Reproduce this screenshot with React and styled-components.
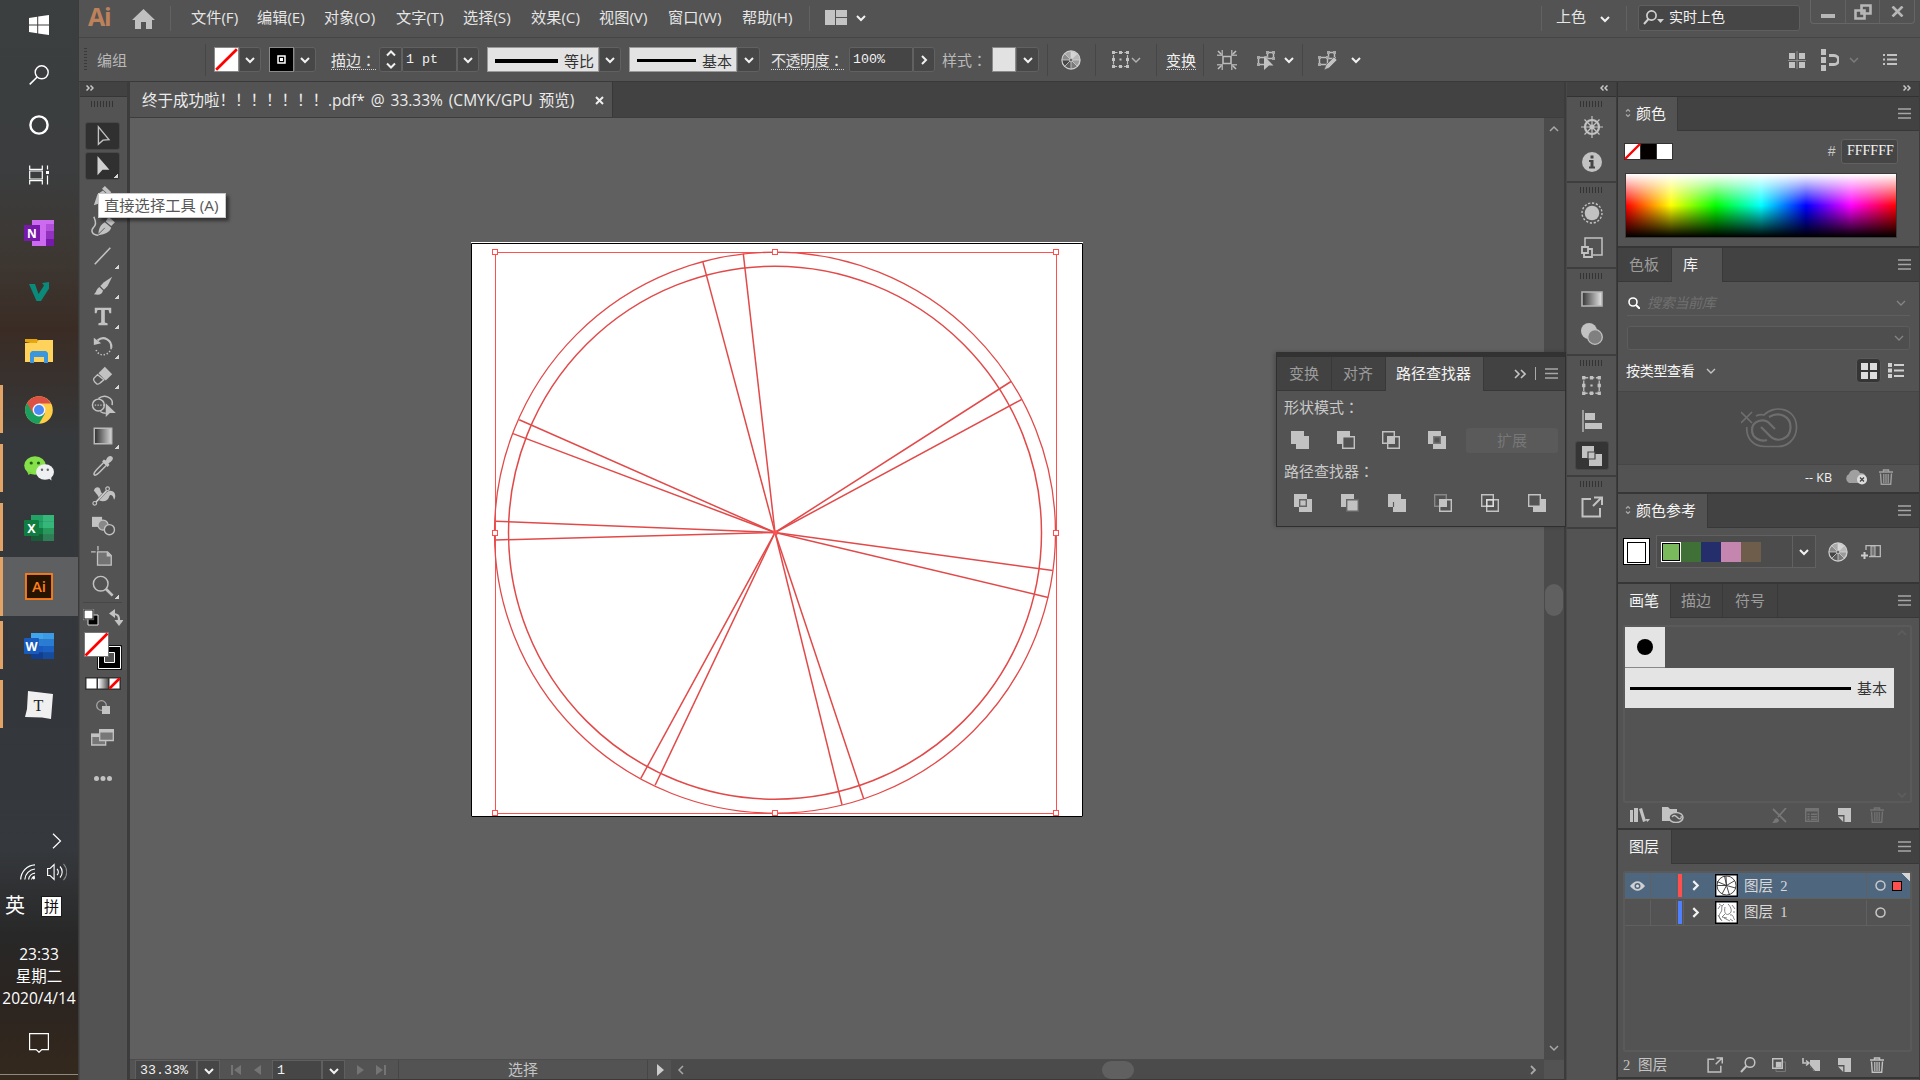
import React from "react";
import styled, { createGlobalStyle, css } from "styled-components";

const Global = createGlobalStyle`
  * { box-sizing: border-box; }
  html, body { margin: 0; padding: 0; background: #535353; overflow: hidden; }
  svg { display: block; flex: none; }
`;

const ui = `"Open Sans", "Noto Sans CJK SC", sans-serif`;
const mono = `"Liberation Mono", "Noto Sans CJK SC", monospace`;
const serif = `"Liberation Serif", "Noto Sans CJK SC", serif`;
const G = "#c2c2c2";

const Screen = styled.div`
  width: 1920px; height: 1080px; display: flex; overflow: hidden;
  font-family: ${ui}; font-size: 15px; line-height: 20px; color: #e6e6e6;
  white-space: nowrap; position: relative; background: #535353;
`;

/* ---------- generic pieces ---------- */
const Cell = styled.div`
  flex: none; display: flex; align-items: center;
  justify-content: ${(p) => (p.$center ? "center" : "flex-start")};
  width: ${(p) => (p.$w ? p.$w + "px" : "auto")};
  height: ${(p) => (p.$h ? p.$h + "px" : "auto")};
  margin-left: ${(p) => p.$ml || 0}px;
  margin-top: ${(p) => p.$mt || 0}px;
`;
const Rule = styled.div`
  flex: none; width: 1px; height: ${(p) => p.$h || 32}px; background: ${(p) => p.$c || "#464646"};
  margin-left: ${(p) => p.$ml || 0}px;
`;
const Text = styled.span`
  color: ${(p) => p.$c || "#e6e6e6"};
  font-size: ${(p) => p.$s || 15}px;
  font-family: ${(p) => (p.$f === "mono" ? mono : p.$f === "serif" ? serif : ui)};
  font-style: ${(p) => (p.$i ? "italic" : "normal")};
  letter-spacing: ${(p) => p.$ls || 0}px;
  word-spacing: ${(p) => p.$ws || 0}px;
  ${(p) => p.$dotted && css`border-bottom: 1px dotted #d0d0d0; line-height: 17px; padding-top: 2px;`}
`;
const Colon = styled.span`font-family: "Noto Sans CJK TC", sans-serif;`;

const Svg = ({ w, h = w, vb, children, ...r }) => (
  <svg width={w} height={h} viewBox={vb || `0 0 ${w} ${h}`} fill="none" {...r}>{children}</svg>
);
const Chev = ({ d = "down", c = "#f2f2f2", w = 2, s = 10 }) => {
  const p = { down: "M1 3l4 4 4-4", up: "M1 7l4-4 4 4", right: "M3 1l4 4-4 4", left: "M7 1L3 5l4 4" }[d];
  return <Svg w={s} vb="0 0 10 10"><path d={p} stroke={c} strokeWidth={w} /></Svg>;
};
const Double = ({ left }) => (
  <Svg w={8} h={6}>
    <path d={left ? "M3.500.500L1 3l2.500 2.500M7.500.500L5 3l2.500 2.500" : "M.5.500L3 3 .5 5.500M4.500.500L7 3 4.500 5.500"} stroke="#c8c8c8" strokeWidth="1.500" />
  </Svg>
);
const Grip = styled.div`
  width: 23px; height: 6px; flex: none;
  background: repeating-linear-gradient(90deg, #333 0 1px, transparent 1px 3px);
`;
const Burger = ({ c = "#a6a6a6" }) => (
  <Svg w={13} h={11}><path d="M0 1h13M0 5.500h13M0 10h13" stroke={c} strokeWidth="1.400" /></Svg>
);

/* ---------- taskbar ---------- */
const Taskbar = styled.div`
  width: 79px; height: 1080px; flex: none; display: flex; flex-direction: column; align-items: stretch;
  border-right: 1px solid #3b3b3b;
  background: linear-gradient(180deg, #3b3f40 0, #3b3d3e 170px, #3d3732 260px, #3a2c25 330px, #38322f 385px, #36393c 440px, #33363a 700px, #35383c 850px, #282828 935px, #2b2420 1000px, #35291d 1080px);
`;
const TaskItem = styled.div`
  height: ${(p) => p.$h || 59}px; flex: none; display: flex; align-items: center; justify-content: center;
  position: relative; background: ${(p) => (p.$active ? "#5d5f61" : "transparent")};
  ${(p) => p.$run && css`&::before { content: ""; position: absolute; left: 0; top: ${p.$active ? 0 : 5}px; bottom: ${p.$active ? 0 : 6}px; width: 3px; background: #e2a366; }`}
`;
const Tray = styled.div`
  margin-top: auto; display: flex; flex-direction: column; height: 254px; color: #fff;
`;
const TrayRow = styled.div`
  height: ${(p) => p.$h}px; display: flex; align-items: center; flex: none;
  padding-left: ${(p) => p.$pl || 0}px; gap: ${(p) => p.$gap || 0}px;
`;
const ImeBadge = styled.div`
  width: 19px; height: 19px; background: #fff; color: #111; font-size: 15px; line-height: 18px; text-align: center;
  outline: 1px solid #1a1a1a;
`;
const Clock = styled.div`
  text-align: center; font-size: 15.500px; line-height: 22px; height: 66px; flex: none; margin-top: 18px;
  width: 78px;
`;
const Notice = styled.div`
  height: 55px; border-bottom: 1px solid #8d8983; display: flex; justify-content: center;
  padding-top: 13px; flex: none; margin-top: 11px;
`;
const OfficeIcon = ({ letter, tile, shade, cols }) => (
  <Svg w={30} h={26}>
    {cols.map((c, i) => <rect key={i} x="7" y={i * 6.5} width="23" height="6.6" fill={c} />)}
    <rect x="19" y="0" width="11" height="26" fill={shade} opacity=".22" />
    <rect x="0" y="5" width="15" height="16" rx="1" fill={tile} />
    <text x="7.500" y="17.500" textAnchor="middle" fontFamily="Open Sans" fontWeight="700" fontSize="12.500" fill="#fff">{letter}</text>
  </Svg>
);
const TaskbarView = () => (
  <Taskbar>
    <TaskItem $h={50}><Svg w={20}><path d="M0 3l8.200-1.200v7.700H0zM9.200 1.600L20 0v9.500H9.200zM0 10.500h8.200v7.700L0 17zM9.200 10.500H20V20L9.200 18.400z" fill="#fff" /></Svg></TaskItem>
    <TaskItem $h={50}><Svg w={20}><circle cx="12.700" cy="7.300" r="6.500" stroke="#fff" strokeWidth="1.400" /><path d="M8.200 12L.7 19.400" stroke="#fff" strokeWidth="1.500" /></Svg></TaskItem>
    <TaskItem $h={50}><Svg w={20}><circle cx="10" cy="10" r="8.600" stroke="#fff" strokeWidth="2.400" /></Svg></TaskItem>
    <TaskItem $h={50}><Svg w={20}><path d="M.7.500v3.800h12.600V.5M.7 19.500v-3.800h12.600v3.800M.7 6h12.600v8H.7zM18.500.500v4M18.500 10.500v9" stroke="#fff" strokeWidth="1.200" /><path d="M17 6h3v3h-3z" fill="#fff" /></Svg></TaskItem>
    <Cell $h={3} />
    <TaskItem>
      <Svg w={30} h={26}>
        <path d="M8 0h22v26H8z" fill="#cc6af0" /><path d="M22 4h8v7h-8z" fill="#b24fd8" /><path d="M22 11h8v8h-8z" fill="#9332bf" /><path d="M22 19h8v7h-8z" fill="#7719aa" />
        <rect x="0" y="5" width="16" height="16" fill="#7719aa" />
        <text x="8" y="17.500" textAnchor="middle" fontFamily="Open Sans" fontWeight="700" fontSize="12" fill="#fff">N</text>
      </Svg>
    </TaskItem>
    <TaskItem><Svg w={20}><path d="M0 2h6l3.500 10L15 3.500 13 1l7-1v6.500L12 19H7.500z" fill="#0a8a7a" /></Svg></TaskItem>
    <TaskItem>
      <Svg w={28} h={24}><path d="M0 0h12l2 3H0z" fill="#e3a30d" /><path d="M0 4h11l2.500-3H28v22H0z" fill="#ffd25c" /><path d="M0 4h11l2-2.500" fill="#e8aa10" /><path d="M5 24V14l2-2h14l2 2v10h-4v-6H9v6z" fill="#3a97dd" /></Svg>
    </TaskItem>
    <TaskItem $run>
      <Svg w={28}>
        <circle cx="14" cy="14" r="13.800" fill="#ffcd46" />
        <path d="M14 14L2 7.100A13.800 13.800 0 0 0 14 27.800L20 17.500z" fill="#1a9f5f" />
        <path d="M2 7A13.900 13.900 0 0 1 26 7.500H14L8 17.500z" fill="#dd5144" />
        <circle cx="14" cy="14" r="6.400" fill="#f4f4f4" /><circle cx="14" cy="14" r="5" fill="#4a8af4" />
      </Svg>
    </TaskItem>
    <TaskItem $run>
      <Svg w={30} h={25}>
        <ellipse cx="11" cy="9.500" rx="10.800" ry="9.300" fill="#85e04a" /><path d="M3 15l1.500 4 4-2.500z" fill="#7ad63f" />
        <circle cx="7.200" cy="7" r="1.600" fill="#245c1e" /><circle cx="14.500" cy="7" r="1.600" fill="#245c1e" />
        <ellipse cx="21" cy="16" rx="9" ry="7.800" fill="#eef0f2" /><path d="M24 22l3.500 2.500-.5-4z" fill="#e6e8ea" />
        <circle cx="18" cy="13.800" r="1.200" fill="#666" /><circle cx="23.800" cy="13.800" r="1.200" fill="#666" />
      </Svg>
    </TaskItem>
    <TaskItem $run><OfficeIcon letter="X" tile="#107c41" shade="#7fffc4" cols={["#21a366", "#21a366", "#107c41", "#185c37"]} /></TaskItem>
    <TaskItem $run $active>
      <Svg w={28}><rect x="1" y="1" width="26" height="25" fill="#261300" stroke="#ff7f18" strokeWidth="1.800" /><text x="14" y="18.500" textAnchor="middle" fontFamily="Open Sans" fontWeight="600" fontSize="15" fill="#ff7f18">Ai</text></Svg>
    </TaskItem>
    <TaskItem $run><OfficeIcon letter="W" tile="#185abd" shade="#2b7cd3" cols={["#41a5ee", "#2b7cd3", "#185abd", "#103f91"]} /></TaskItem>
    <TaskItem $run>
      <Svg w={28}><path d="M3 0l25 3-2 25-9-1.500L0 26l2-8z" fill="#f0f0f0" /><text x="13.500" y="19.500" textAnchor="middle" fontFamily="Liberation Serif" fontSize="16" fill="#222">T</text></Svg>
    </TaskItem>
    <Tray>
      <TrayRow $h={30} $pl={52}><Svg w={10} h={16}><path d="M1 .7L8.500 8 1 15.300" stroke="#fff" strokeWidth="1.200" /></Svg></TrayRow>
      <TrayRow $h={31} $pl={20} $gap={11}>
        <Svg w={16}><g stroke="#fff" strokeWidth="1.200"><path d="M.7 15.500A15 15 0 0 1 15 .800" /><path d="M4.800 15.500A11 11 0 0 1 15 5" /><path d="M8.600 15.500A7 7 0 0 1 15 9.200" /></g><path d="M11.500 15.500a4 4 0 0 1 3.500-3.500" stroke="#fff" /><circle cx="13.700" cy="14" r="1.400" fill="#fff" /></Svg>
        <Svg w={20} h={18}><path d="M.6 5.500h2.500l4-4v15l-4-4H.6zM10 6a4 4 0 0 1 0 6M13 3.500a8 8 0 0 1 0 11" stroke="#fff" strokeWidth="1.100" /><path d="M16.500.8a12 12 0 0 1 0 16.400" stroke="#888" strokeWidth="1.100" /></Svg>
      </TrayRow>
      <TrayRow $h={38} $pl={5} $gap={17}><Text $s={20} $c="#fff">英</Text><ImeBadge>拼</ImeBadge></TrayRow>
      <Clock>23:33<br />星期二<br />2020/4/14</Clock>
      <Notice><Svg w={20} h={20}><path d="M.6.600h18.800v16h-6.600L10 19.300l-2.800-2.700H.6z" stroke="#fff" strokeWidth="1.200" /></Svg></Notice>
    </Tray>
  </Taskbar>
);

/* ---------- application frame ---------- */
const AppFrame = styled.div`width: 1841px; display: flex; flex-direction: column; flex: none; background: #535353;`;
const MenuBar = styled.div`height: 38px; display: flex; align-items: flex-start; flex: none; border-bottom: 1px solid #454545;`;
const Mid = styled.div`height: ${(p) => p.$h || 36}px; display: flex; align-items: center; width: ${(p) => (p.$w ? p.$w + "px" : "auto")}; margin-left: ${(p) => p.$ml || 0}px; flex: none;`;
const AiLogo = styled.div`width: 25px; margin-left: 9px; font: 700 25px/33px "Open Sans"; color: #bd825b; letter-spacing: -1.200px; flex: none;`;
const SearchBox = styled.div`
  width: 162px; height: 26px; margin: 5px 0 0 11px; border: 1px solid #5f5f5f; border-radius: 3px; background: #464646;
  display: flex; align-items: center; padding: 0 0 2px 4px; gap: 5px; flex: none;
`;
const WinButtons = styled.div`
  margin-left: 10px; width: 105px; height: 24px; border: 1px solid #666; border-top: 0; border-radius: 0 0 4px 4px; display: flex; flex: none;
  > div { flex: 1; display: flex; justify-content: center; align-items: center; }
  > div + div { border-left: 1px solid #626262; }
`;
const menus = [["文件(F)", 66], ["编辑(E)", 67], ["对象(O)", 72], ["文字(T)", 67], ["选择(S)", 68], ["效果(C)", 68], ["视图(V)", 69], ["窗口(W)", 74], ["帮助(H)", 67]];

const MenuBarView = () => (
  <MenuBar>
    <AiLogo>Ai</AiLogo>
    <Mid $ml={19} $w={24} $h={38}><Svg w={23} h={20}><path d="M11.500 0L23 11h-3v9h-6v-7H9v7H3v-9H0z" fill="#c0c0c0" /></Svg></Mid>
    <Mid $ml={14} $w={21}><Rule $h={25} $c="#616161" /></Mid>
    {menus.map(([t, w]) => <Mid key={t} $w={w} $h={34}><Text $s={15.2}>{t}</Text></Mid>)}
    <Mid><Rule $h={25} $c="#616161" /></Mid>
    <Mid $ml={15} $h={35}><Svg w={22} h={15}><path d="M0 0h10v15H0zM11 0h11v7H11zM11 8h11v7H11z" fill="#c4c4c4" /></Svg></Mid>
    <Mid $ml={9} $h={35}><Chev /></Mid>
    <Mid $ml={675}><Rule $h={25} $c="#616161" /></Mid>
    <Mid $ml={14} $w={44} $h={32}><Text $s={15}>上色</Text></Mid>
    <Mid $w={26} $h={38}><Chev /></Mid>
    <Mid><Rule $h={25} $c="#616161" /></Mid>
    <SearchBox>
      <Svg w={21} h={15}><circle cx="8.500" cy="5.500" r="4.600" stroke="#d0d0d0" strokeWidth="1.700" /><path d="M5.500 9L1 14" stroke="#d0d0d0" strokeWidth="2" /><path d="M14 9h7l-3.500 4z" fill="#d0d0d0" /></Svg>
      <Text $s={14} $c="#f4f4f4">实时上色</Text>
    </SearchBox>
    <WinButtons>
      <div><Svg w={14} h={14}><path d="M0 9h14v4H0z" fill="#b6b6b6" /></Svg></div>
      <div><Svg w={18} h={16}><path d="M7.500 1.500h9v8h-9zM1.500 6.500h9v8h-9z" stroke="#b6b6b6" strokeWidth="2.600" /></Svg></div>
      <div><Svg w={13} h={11}><path d="M1.500.500l10 10M11.500.500l-10 10" stroke="#b6b6b6" strokeWidth="2.600" /></Svg></div>
    </WinButtons>
  </MenuBar>
);

const ControlBar = styled.div`height: 44px; display: flex; align-items: center; flex: none; border-bottom: 1px solid #3a3a3a; padding-right: 22px;`;
const DotGrip = styled.div`width: 3px; height: 24px; margin-left: 5px; flex: none; background: repeating-linear-gradient(180deg, #3a3a3a 0 1px, transparent 1px 3px);`;
const Drop = styled.div`
  width: ${(p) => p.$w || 22}px; height: 25px; background: ${(p) => (p.$flat ? "transparent" : "#474747")}; border: 1px solid #616161; flex: none;
  display: flex; align-items: center; justify-content: center; border-radius: 0 3px 3px 0; ${(p) => p.$lead && "border-radius: 3px 0 0 3px;"}
  flex-direction: column;
`;
const Field = styled.div`
  width: ${(p) => p.$w}px; height: ${(p) => p.$h || 25}px; background: #454545; border: 1px solid #616161; flex: none; display: flex; align-items: center;
  padding: 0 0 0 ${(p) => p.$pl ?? 3}px; font-family: ${mono}; font-size: 13.300px; color: #f2f2f2; border-radius: 2px 0 0 2px; margin-left: ${(p) => p.$ml || 0}px;
`;
const Swatch = styled.div`
  width: ${(p) => p.$w || 25}px; height: 25px; border: 1px solid #8a8a8a; background: ${(p) => p.$bg || "#e2e2e2"}; flex: none; margin-left: ${(p) => p.$ml || 0}px;
  display: flex; align-items: center; justify-content: center;
`;
const StrokePreview = styled.div`
  width: ${(p) => p.$w}px; height: 25px; background: #e3e3e3; border: 1px solid #999; margin-left: 8px; display: flex; align-items: center; justify-content: space-between;
  padding: 2px 4px 0 7px; flex: none;
  &::before { content: ""; height: ${(p) => p.$t}px; width: ${(p) => p.$lw}px; background: #000; }
`;
const NoneFill = ({ s, w = 2 }) => <Svg w={s} vb="0 0 20 20"><path d="M0 0h20v20H0z" fill="#fff" /><path d="M1 19L19 1" stroke="#f00" strokeWidth={w} /></Svg>;
const Wheel = () => (
  <Svg w={20}>
    <circle cx="10" cy="10" r="9" fill="#9b9b9b" stroke="#cfcfcf" strokeWidth="1.400" />
    <path d="M10 10L10 1.500A8.500 8.500 0 0 1 16 4z" fill="#d4d4d4" /><path d="M10 10l6-6a8.500 8.500 0 0 1 2.500 6z" fill="#b8b8b8" />
    <path d="M10 10L4 4a8.500 8.500 0 0 1 6-2.500z" fill="#a8a8a8" /><path d="M10 10H1.500A8.500 8.500 0 0 1 4 4z" fill="#8a8a8a" />
    <path d="M10 10l-6 6a8.500 8.500 0 0 1-2.500-6z" fill="#444" /><path d="M10 10v8.500A8.500 8.500 0 0 1 4 16z" fill="#5c5c5c" />
    <path d="M10 10l6 6a8.500 8.500 0 0 1-6 2.500z" fill="#7a7a7a" />
    <path d="M10 1v18M1 10h18M3.700 3.700l12.600 12.600M16.300 3.700L3.700 16.300" stroke="#d8d8d8" strokeWidth=".7" /><circle cx="10" cy="10" r="1.800" fill="#6a6a6a" stroke="#ddd" strokeWidth=".6" />
  </Svg>
);
const Nodes = () => <><path d="M2.500 7.500h8v7h-8zM11.500 2.500h6v6h-6z" stroke="#bdbdbd" strokeWidth="1.500" /><path d="M1 6h3v3H1zM9 6h3v3H9zM1 13h3v3H1zM10 1h3v3h-3zM16 1h3v3h-3zM16 7h3v3h-3z" fill="#a8a8a8" /></>;
const Frame9 = ({ s = 19 }) => (
  <Svg w={s} vb="0 0 19 19"><path d="M2.500 2.500h14v14h-14z" stroke="#bcbcbc" strokeWidth="1.200" strokeDasharray="4 1.500" /><path d="M1 1h3v3H1zM8 1h3v3H8zM15 1h3v3h-3zM1 8h3v3H1zM15 8h3v3h-3zM1 15h3v3H1zM8 15h3v3H8zM15 15h3v3h-3zM8.500 8.500h2v2h-2z" fill={G} /></Svg>
);

const ControlBarView = () => (
  <ControlBar>
    <DotGrip />
    <Cell $ml={10} $w={108}><Text $c="#b9b9b9">编组</Text></Cell>
    <Rule />
    <Swatch $ml={8} $bg="#fff"><NoneFill s={23} w={2.4} /></Swatch><Drop><Chev /></Drop>
    <Swatch $ml={8} $bg="#000"><Svg w={9}><path d="M1 1h7v7H1z" stroke="#fff" strokeWidth="1.500" /><path d="M3 3h3v3H3z" fill="#fff" /></Svg></Swatch><Drop $w={22}><Chev /></Drop>
    <Cell $ml={15} $w={48}><Text $dotted>描边<Colon>：</Colon></Text></Cell>
    <Drop $lead $w={23}><Svg w={10} h={19}><path d="M1 5.500l4-4 4 4M1 13.500l4 4 4-4" stroke="#f2f2f2" strokeWidth="2" /></Svg></Drop>
    <Field $w={55}>1 pt</Field><Drop><Chev /></Drop>
    <StrokePreview $w={112} $t={4} $lw={63}><Text $c="#333">等比</Text></StrokePreview><Drop><Chev /></Drop>
    <StrokePreview $w={108} $t={3} $lw={59}><Text $c="#333">基本</Text></StrokePreview><Drop $w={23}><Chev /></Drop>
    <Cell $ml={11} $w={78}><Text $dotted $ls={-0.5}>不透明度<Colon>：</Colon></Text></Cell>
    <Field $w={64}>100%</Field><Drop><Chev d="right" /></Drop>
    <Cell $ml={7} $w={50}><Text $c="#b9b9b9">样式<Colon>：</Colon></Text></Cell>
    <Swatch $w={24} /><Drop $w={23}><Chev /></Drop>
    <Rule $ml={8} />
    <Cell $ml={13} $w={20}><Wheel /></Cell>
    <Rule $ml={14} />
    <Cell $ml={15} $w={30}><Frame9 /><Cell $ml={1}><Chev c="#b0b0b0" w={1.500} /></Cell></Cell>
    <Rule $ml={15} />
    <Cell $ml={9} $w={37}><Text $dotted $c="#f0f0f0">变换</Text></Cell>
    <Rule />
    <Cell $ml={13} $w={20}><Svg w={20}><path d="M6 6.500h8v7H6z" stroke="#bcbcbc" strokeWidth="1.600" /><g stroke={G} strokeWidth="1.500"><path d="M1 1l4 4M19 1l-4 4M1 19l4-4M19 19l-4-4" /></g><path d="M0 6V4.500h4.500V0H6v6zM20 6V4.500h-4.500V0H14v6zM0 14v1.500h4.500V20H6v-6zM20 14v1.500h-4.500V20H14v-6z" fill="#a8a8a8" /></Svg></Cell>
    <Cell $ml={19} $w={20}><Svg w={20}><Nodes /><path d="M8 6l9.500 9.500h-4.500l-5 4.500z" fill={G} /></Svg></Cell>
    <Cell $ml={8} $w={10}><Chev /></Cell>
    <Rule $ml={8} />
    <Cell $ml={14} $w={20}><Svg w={20}><Nodes /><path d="M17 7l3 3-8 8-5 2 2-5z" fill={G} stroke="#535353" strokeWidth=".6" /></Svg></Cell>
    <Cell $ml={14} $w={10}><Chev /></Cell>
    <Cell $ml={427} $w={18}><Svg w={18}><path d="M1 2h6v6H1zM11 2h6v6h-6zM1 11h6v6H1zM11 11h6v6h-6z" fill={G} /><path d="M9 0v18M0 9.500h18" stroke="#8c8c8c" /></Svg></Cell>
    <Cell $ml={15} $w={18}><Svg w={18} h={22}><path d="M0 0h5v6H0zM0 8h5v6H0zM0 16h5v6H0z" fill={G} /><path d="M8 6.500h5a4.500 4.500 0 0 1 0 9H8" stroke={G} strokeWidth="2.800" /></Svg></Cell>
    <Cell $ml={10} $w={10}><Chev c="#7c7c7c" w={1.500} /></Cell>
    <Cell $ml={24} $w={14}><Svg w={14} h={11}><path d="M0 1h2M0 5.500h2M0 10h2M4 1h10M4 5.500h10M4 10h10" stroke={G} strokeWidth="2" /></Svg></Cell>
  </ControlBar>
);

/* ---------- left tools ---------- */
const Work = styled.div`display: flex; height: 998px; flex: none; background: #3c3c3c;`;
const Tools = styled.div`width: 48px; flex: none; display: flex; flex-direction: column; background: #535353; border-left: 1px solid #484848;`;
const ToolsHead = styled.div`height: 15px; background: #424242; border-bottom: 1px solid #363636; display: flex; align-items: center; padding: 0 0 2px 6px; flex: none;`;
const ToolsGrip = styled.div`height: 25px; padding: 4px 0 0 11px; flex: none;`;
const Tool = styled.div`
  height: 28px; width: 35px; margin: 0 0 2px 5px; flex: none; display: flex; align-items: center; justify-content: center; position: relative;
  border-radius: 3px; ${(p) => p.$on && css`background: #303030; border: 1px solid #484848;`}
  ${(p) => p.$more && css`&::after { content: ""; position: absolute; right: 1px; bottom: 1px; width: 4px; height: 4px; background: linear-gradient(135deg, transparent 50%, #d5d5d5 50%); }`}
`;
const toolIcons = [
  ["sel", 1, 0, <path d="M7 2v19l5-4.500 6.500-.5z" stroke={G} strokeWidth="1.500" />],
  ["direct", 1, 1, <path d="M6 1v21l5.500-6H19z" fill="#d0d0d0" />],
  ["pen", 0, 1, <><path d="M2 22l4-12 6-4 6 6-4 6z" fill={G} /><path d="M11 4l3-3 7 7-3 3z" fill={G} /></>],
  ["curve", 0, 0, <><path d="M7 22c0-7 2-11 7-14l7 6c-2 5-6 7-14 8zM15 7l3-5 7 6-4 4z" fill={G} /><path d="M7 21l7-7" stroke="#555" /><path d="M7 22C0 22-2 17 2 13c4-4 1-8 0-11" stroke={G} strokeWidth="1.600" /></>],
  ["line", 0, 1, <path d="M3 21L20 3" stroke={G} strokeWidth="1.700" />],
  ["brush", 0, 1, <><path d="M22 2l-5 10-4 4-4-4 4-4z" fill={G} /><path d="M8 13l4 4c-1 5-5 5-10 4 3-2 2-5 6-8z" fill={G} /></>],
  ["type", 0, 1, <path d="M3 3h18v6h-2l-1-3.500h-4V19l3 1v2H7v-2l3-1V5.500H6L5 9H3z" fill={G} />],
  ["rotate", 0, 1, <><path d="M6 6C13 0 22 6 21 14" stroke={G} strokeWidth="2.400" /><path d="M21 14C19 23 7 25 4 15" stroke={G} strokeWidth="1.700" strokeDasharray="1.500 2" /><path d="M2 3v8l8-2z" fill={G} /></>],
  ["eraser", 0, 1, <><path d="M7 9l7-7 8 8-7 7z" fill={G} /><path d="M6 10.500l-4 4q-1 2 1 4l2 2q2 1 4-1l4-3.500z" stroke={G} strokeWidth="1.500" /></>],
  ["shape", 0, 0, <><circle cx="7" cy="11" r="6.500" stroke={G} strokeWidth="1.600" /><path d="M7 4c6-5 17-2 15 7M9 18q3 2 6 2" stroke={G} strokeWidth="1.600" /><path d="M3 11h12" stroke={G} strokeWidth="1.500" strokeDasharray="1.500 1.500" /><path d="M15 9v15l4.500-4.500H26z" fill={G} /></>],
  ["grad", 0, 1, <path d="M2.500 3.500h19v17h-19z" fill="url(#tg)" stroke="#b9b9b9" strokeWidth="1.600" />],
  ["drop", 0, 0, <><path d="M3 22c-2-1 0-4 3-7l7-7 3 3-7 7c-2 2-4 4-6 4z" stroke={G} strokeWidth="1.600" /><path d="M11 7l2-2 2 1c2-5 5-6 7-4s0 5-4 7l1 2-2 2z" fill={G} /></>],
  ["warp", 0, 0, <><path d="M2 6c1-4 6-5 7-1 1 3 1 5 4 4 3-1 6-4 10-2 3 2 3 7 1 9-1-5-4-6-5-4-1 5-6 7-11 5 0-5-4-8-6-11z" fill={G} /><path d="M3 20L17 5" stroke="#777" strokeWidth="2.600" /><path d="M3 20L17 5" stroke="#ddd" strokeWidth="1.300" /><circle cx="3" cy="20" r="2" fill="#535353" stroke={G} strokeWidth="1.300" /><circle cx="17" cy="4" r="2" fill="#535353" stroke={G} strokeWidth="1.300" /></>],
  ["blend", 0, 0, <><path d="M0 2h11v11H0z" fill={G} /><circle cx="12" cy="11" r="5.500" fill="#888" stroke={G} strokeWidth="1.400" /><circle cx="19" cy="16" r="5.500" fill="#535353" stroke={G} strokeWidth="1.500" /></>],
  ["board", 0, 0, <><path d="M6 7.500h11l4 4V22H6z" fill="#737373" stroke={G} strokeWidth="1.400" /><path d="M16 7v5.500h5.500" fill={G} /><path d="M-1 7.500h5M6.500 1v5" stroke={G} strokeWidth="1.400" /></>],
  ["zoom", 0, 1, <><circle cx="9.500" cy="9.500" r="8" stroke={G} strokeWidth="1.600" /><path d="M15 15l7.500 7.500" stroke={G} strokeWidth="3" /></>],
];
const ToolExtras = styled.div`
  width: 39px; margin-left: 3px; border-top: 1px solid #474747; padding-top: 5px; display: flex; flex-direction: column; align-items: center; flex: none;
`;
const ToolsView = () => (
  <Tools>
    <ToolsHead><Double /></ToolsHead>
    <ToolsGrip><Grip /></ToolsGrip>
    {toolIcons.map(([k, on, more, ic]) => (
      <Tool key={k} $on={!!on} $more={!!more}><Svg w={22} vb="0 0 24 24" overflow="visible">
        <defs><linearGradient id="tg"><stop stopColor="#2c2c2c" /><stop offset="1" stopColor="#d8d8d8" /></linearGradient></defs>{ic}</Svg></Tool>
    ))}
    <ToolExtras>
      <Cell $mt={1}><Svg w={40} h={17}><path d="M5 6h10v10H5z" fill="#000" stroke="#ddd" /><path d="M1 1h9v9H1z" fill="#fff" stroke="#111" /><path d="M.3.300h10.400v10.400H.3z" stroke="#bbb" strokeWidth=".5" /><path d="M30 5c6 0 6 3 6 7" stroke={G} strokeWidth="2.200" /><path d="M32 0v9l-6-4.500zM31.500 11h9L36 17z" fill={G} /></Svg></Cell>
      <Cell $mt={6}><Svg w={38} h={38}>
        <path d="M13.500 13.500h24v24h-24z" fill="#000" stroke="#111" /><path d="M14.500 14.500h22v22h-22z" stroke="#fff" /><path d="M20.500 20.500h10v10h-10z" fill="#535353" stroke="#fff" />
        <path d="M.5.500h24v24H.5z" fill="#fff" stroke="#777" /><path d="M1.500 23.500l22-22" stroke="#f00" strokeWidth="2.600" />
      </Svg></Cell>
      <Cell $mt={7}><Svg w={36} h={13}><path d="M0 0h36v13H0z" fill="#333" /><path d="M1.500 1.500h10v10h-10z" fill="#fff" /><path d="M13 1.500h10v10H13z" fill="url(#sg)" /><path d="M24.500 1.500h10v10h-10z" fill="#fff" /><path d="M24.500 11.500l10-10" stroke="#f00" strokeWidth="2.600" /><defs><linearGradient id="sg"><stop stopColor="#fff" /><stop offset="1" stopColor="#555" /></linearGradient></defs></Svg></Cell>
      <Cell $mt={10}><Svg w={14}><circle cx="5.500" cy="5.500" r="4.800" stroke="#a5a5a5" strokeWidth="1.300" /><path d="M6 6h8v8H6z" fill={G} /></Svg></Cell>
      <Cell $mt={15}><Svg w={23} h={17}><path d="M.7 5.500h14v10.500H.7z" fill="#777" stroke={G} strokeWidth="1.300" /><path d="M8.700 1h13.600v10.500H8.700z" fill="#777" stroke={G} strokeWidth="1.300" /><path d="M8 0h15v3.500H8zM0 4.500h8V8H0z" fill={G} /></Svg></Cell>
      <Cell $mt={30}><Svg w={18} h={5}><circle cx="2.500" cy="2.500" r="2.500" fill={G} /><circle cx="9" cy="2.500" r="2.500" fill={G} /><circle cx="15.500" cy="2.500" r="2.500" fill={G} /></Svg></Cell>
    </ToolExtras>
  </Tools>
);
const Tooltip = styled.div`
  position: absolute; left: 98px; top: 193px; width: 128px; height: 25px; background: #fff; border: 1px solid #c9c9c9; color: #575757;
  font-size: 15.300px; line-height: 22px; padding-left: 5px; box-shadow: 3px 3px 3px rgba(0,0,0,.45); z-index: 3;
`;

/* ---------- document ---------- */
const Doc = styled.div`width: 1434px; margin-left: 3px; display: flex; flex-direction: column; flex: none;`;
const TabStrip = styled.div`height: 36px; background: #424242; display: flex; flex: none; border-bottom: 1px solid #3d3d3d;`;
const DocTab = styled.div`width: 483px; background: #535353; border-right: 1px solid #383838; display: flex; align-items: center; padding: 1px 8px 0 12px; justify-content: space-between;`;
const DocBody = styled.div`height: 941px; display: flex; flex: none;`;
const Canvas = styled.div`width: 1414px; background: #606060; padding: 124px 0 0 340px; flex: none;`;
const VScroll = styled.div`width: 20px; background: #4b4b4b; display: flex; flex-direction: column; align-items: center; justify-content: space-between; padding: 6px 0; flex: none;`;
const VThumb = styled.div`width: 18px; height: 32px; border-radius: 9px; background: #606060;`;
const Status = styled.div`height: 21px; display: flex; background: #535353; border-top: 1px solid #4c4c4c; border-bottom: 1px solid #3a3a3a; flex: none; align-items: stretch; > * { flex: none; }`;
const StatusField = styled.div`background: #464646; border: 1px solid #5f5f5f; border-bottom: 0; width: ${(p) => p.$w}px; margin-left: ${(p) => p.$ml || 0}px; padding: 1px 0 0 4px; font: 13.300px/18px ${mono}; color: #f2f2f2;`;
const StatusDrop = styled.div`background: #464646; border: 1px solid #5f5f5f; border-bottom: 0; width: 23px; display: flex; justify-content: center; padding-top: 5px;`;
const HScroll = styled.div`width: 873px; background: #4b4b4b; display: flex; align-items: center; padding: 0 6px 0 5px;`;
const HThumb = styled.div`width: 32px; height: 18px; border-radius: 9px; background: #606060; margin: 0 auto 0 416px;`;

const rays = [[702.9, 262.1], [743.3, 253.7], [1011, 381.5], [1021.6, 399.5], [1052.7, 570.6], [1048.2, 597.4], [863.7, 798.7], [842, 804.8], [655.1, 785.3], [640.8, 778.4], [495.5, 540], [495.5, 521.2], [513, 433.6], [519.2, 419.8]];
const Artwork = () => (
  <Svg w={614} h={576} vb="470 242 614 576">
    <path d="M471 242h612v575H471z" fill="#fff" />
    <path d="M471.500 243.500h611v573h-611z" stroke="#000" />
    <path d="M495.500 252.500h561v561h-561z" stroke="#ff4f4f" />
    <g stroke="#e24a4a" strokeWidth="1.300">
      <circle cx="775" cy="532.700" r="280.500" />
      <circle cx="775" cy="532.700" r="266.500" strokeWidth="1.500" />
      {rays.map(([x, y], i) => <path key={i} d={`M775 532.500L${x} ${y}`} strokeWidth="1.500" />)}
    </g>
    {[495.5, 775.5, 1056.5].flatMap((x) => [252.5, 533.5, 813.5].map((y) => (x === 775.5 && y === 533.5 ? null : <rect key={x + "-" + y} x={x - 3} y={y - 3} width="5" height="5" fill="#fff" stroke="#ff4f4f" />)))}
    <rect x="773" y="530.500" width="4.500" height="4.500" fill="#ff4f4f" />
  </Svg>
);
const DocView = () => (
  <Doc>
    <TabStrip><DocTab><Text $s={15.5} $c="#ececec" $ws={1.9}>终于成功啦！！！！！！！.pdf* @ 33.33% (CMYK/GPU 预览)</Text><Svg w={9}><path d="M1 1l7 7M8 1L1 8" stroke="#eee" strokeWidth="2" /></Svg></DocTab></TabStrip>
    <DocBody>
      <Canvas><Artwork /></Canvas>
      <VScroll><Chev d="up" c="#a8a8a8" w={1.500} /><Cell $mt={22}><VThumb /></Cell><Chev c="#a8a8a8" w={1.500} /></VScroll>
    </DocBody>
    <Status>
      <StatusField $w={62} $ml={5}>33.33%</StatusField><StatusDrop><Chev /></StatusDrop>
      <Cell $ml={11} $w={41}><Svg w={31} h={12}><path d="M0 1h2v10H0zM10 1v10L3 6zM30 1v10l-7-5z" fill="#747474" /></Svg></Cell>
      <StatusField $w={50}>1</StatusField><StatusDrop><Chev /></StatusDrop>
      <Cell $ml={12} $w={41}><Svg w={31} h={12}><path d="M0 1v10l7-5zM19 1v10l7-5zM27 1h2v10h-2z" fill="#747474" /></Svg></Cell>
      <Rule $h={19} />
      <Cell $w={248} $center $h={18}><Text $c="#c4c4c4">选择</Text></Cell>
      <Rule $h={19} />
      <Cell $ml={9} $w={14}><Svg w={8} h={12}><path d="M0 0v12l7-6z" fill="#ccc" /></Svg></Cell>
      <HScroll><Chev d="left" c="#a8a8a8" w={1.500} /><HThumb /><Chev d="right" c="#a8a8a8" w={1.800} /></HScroll>
    </Status>
  </Doc>
);

/* ---------- pathfinder ---------- */
const Floating = styled.div`position: absolute; left: 1276px; top: 352px; width: 290px; height: 175px; background: #535353; border: 1px solid #2f2f2f; border-top: 5px solid #323232; display: flex; flex-direction: column; box-shadow: -2px 0 4px rgba(0,0,0,.2); z-index: 2;`;
const Tabs = styled.div`height: 34px; background: #424242; display: flex; flex: none; border-bottom: 1px solid #383838;`;
const Tab = styled.div`
  width: ${(p) => p.$w}px; flex: none; display: flex; align-items: center; padding-left: ${(p) => p.$pl ?? 12}px; gap: 5px; font-size: 15px;
  border-right: 1px solid #393939; color: ${(p) => (p.$on ? "#f4f4f4" : "#9c9c9c")}; padding-bottom: 2px;
  ${(p) => p.$on && css`background: #535353; height: 34px;`}
`;
const TabEnd = styled.div`margin-left: auto; display: flex; align-items: center; gap: ${(p) => p.$gap || 8}px; padding-right: ${(p) => p.$pr || 7}px;`;
const IconRow = styled.div`display: flex; height: 18px; padding-left: ${(p) => p.$pl}px; gap: ${(p) => p.$gap}px; margin-top: ${(p) => p.$mt}px; align-items: center; flex: none;`;
const Caption = styled.div`height: 20px; margin: ${(p) => p.$mt}px 0 0 7px; color: #c9c9c9; font-size: 15px; flex: none;`;
const Expand = styled.div`width: 92px; height: 25px; background: #5a5a5a; border-radius: 3px; color: #777; text-align: center; line-height: 25px; margin-left: -7px;`;
const Sq = ({ a, b, m, ao = G, bo = G, f }) => (
  <Svg w={18}>
    {f !== "rev" && <path d="M.7.700h11.600v11.600H.7z" fill={a} stroke={ao} strokeWidth="1.400" />}
    <path d="M5.700 5.700h11.600v11.600H5.700z" fill={b} stroke={bo} strokeWidth="1.400" />
    {f === "rev" && <path d="M.7.700h11.600v11.600H.7z" fill={a} stroke={ao} strokeWidth="1.400" />}
    {m && <path d="M5.700 5.700h6.600v6.600H5.700z" fill={m.f} stroke={m.s} strokeWidth="1.400" />}
  </Svg>
);
const BG = "#535353";
const Pathfinder = () => (
  <Floating>
    <Tabs>
      <Tab $w={55}>变换</Tab><Tab $w={54} $pl={11}>对齐</Tab><Tab $w={98} $pl={10} $on>路径查找器</Tab>
      <TabEnd $pr={7} $gap={9}><Svg w={12} h={10}><path d="M1 1l4 4-4 4M7 1l4 4-4 4" stroke="#c4c4c4" strokeWidth="1.600" /></Svg><Rule $h={13} $c="#aaa" /><Burger /></TabEnd>
    </Tabs>
    <Caption $mt={6}>形状模式<Colon>：</Colon></Caption>
    <IconRow $pl={14} $gap={27.5} $mt={14}>
      <Sq a={G} b={G} /><Sq a={G} b={BG} /><Sq a="none" b="none" m={{ f: G, s: G }} /><Sq a={G} b={G} m={{ f: BG, s: "#777" }} />
      <Expand>扩展</Expand>
    </IconRow>
    <Caption $mt={12}>路径查找器<Colon>：</Colon></Caption>
    <IconRow $pl={17} $gap={28.8} $mt={13}>
      <Sq a={G} b={G} m={{ f: G, s: "#666" }} /><Sq a={G} b={G} bo="#666" />
      <Svg w={18}><path d="M0 0h13v5h5v13H5v-5H0z" fill={G} /><path d="M5.500 13V8" stroke="#5a5a5a" strokeWidth="1.200" /></Svg>
      <Sq a="none" b="none" ao="#888" m={{ f: G, s: G }} /><Sq a="none" b="none" m={{ f: "none", s: "#ddd" }} /><Sq a={BG} b={G} f="rev" />
    </IconRow>
  </Floating>
);

/* ---------- icon dock ---------- */
const Dock = styled.div`width: 50px; margin-left: 2px; display: flex; flex-direction: column; background: #535353; flex: none; border-left: 1px solid #484848;`;
const Head = styled.div`height: 15px; background: #424242; border-bottom: 1px solid #323232; display: flex; align-items: center; justify-content: flex-end; padding: 0 8px 2px 0; flex: none;`;
const Group = styled.div`height: ${(p) => p.$h}px; flex: none; border-bottom: 2px solid #3e3e3e; display: flex; flex-direction: column; align-items: center; padding-top: 4px;`;
const DockIcon = styled.div`
  width: 34px; height: 29px; margin-top: 6px; flex: none; display: flex; align-items: center; justify-content: center; border-radius: 3px;
  ${(p) => p.$on && css`background: #353535; border: 1px solid #484848;`}
  ${Grip} + & { margin-top: 5px; }
`;
const Export = ({ s = 22 }) => <Svg w={s} vb="0 0 22 22"><path d="M10 3H1.500v17.500H19V12" stroke={G} strokeWidth="2" /><path d="M12 10l8-8M13 1.500h8V9" stroke={G} strokeWidth="2" /></Svg>;
const DockView = () => (
  <Dock>
    <Head><Double left /></Head>
    <Group $h={86}><Grip />
      <DockIcon><Svg w={22}><circle cx="11" cy="11" r="7" stroke={G} strokeWidth="2.200" /><circle cx="11" cy="11" r="2.500" fill={G} /><path d="M11 0v22M0 11h22M3.500 3.500l15 15M18.500 3.500l-15 15" stroke={G} strokeWidth="1.200" /></Svg></DockIcon>
      <DockIcon><Svg w={20}><circle cx="10" cy="10" r="10" fill={G} /><path d="M8.500 3.500h3v3h-3zM7 8h4.500v6.500H13v2H7v-2h1.500V10H7z" fill="#444" /></Svg></DockIcon>
    </Group>
    <Group $h={86}><Grip />
      <DockIcon><Svg w={22}><circle cx="11" cy="11" r="7.300" fill={G} /><circle cx="11" cy="11" r="10" stroke={G} strokeWidth="1.400" strokeDasharray="2.200 1.700" /></Svg></DockIcon>
      <DockIcon><Svg w={22} h={21}><path d="M4 9V1h17v17h-9" stroke={G} strokeWidth="1.500" /><path d="M1 10h6v6H1zM7 12h4v8H3v-4" stroke={G} strokeWidth="1.800" /></Svg></DockIcon>
    </Group>
    <Group $h={87}><Grip />
      <DockIcon><Svg w={22} h={16}><defs><linearGradient id="dg"><stop stopColor="#333" /><stop offset="1" stopColor="#e6e6e6" /></linearGradient></defs><path d="M1 1h20v14H1z" fill="url(#dg)" stroke="#b5b5b5" strokeWidth="1.600" /></Svg></DockIcon>
      <DockIcon><Svg w={22}><circle cx="8" cy="8" r="8" fill={G} /><circle cx="14" cy="14" r="7.300" fill="#808080" stroke={G} strokeWidth="1.300" /></Svg></DockIcon>
    </Group>
    <Group $h={121}><Grip />
      <DockIcon><Frame9 s={21} /></DockIcon>
      <DockIcon><Svg w={20} h={22}><path d="M1 0v22" stroke={G} strokeWidth="1.300" /><path d="M3 3h10v7H3zM3 13h17v6H3z" fill={G} /></Svg></DockIcon>
      <DockIcon $on><Svg w={20}><path d="M0 0h12v12H0zM7 8h13v12H7z" fill={G} /><path d="M6 6h7v7H6z" fill={G} stroke="#444" strokeWidth="1.200" /></Svg></DockIcon>
    </Group>
    <Group $h={52}><Grip /><DockIcon><Export /></DockIcon></Group>
  </Dock>
);

/* ---------- right panels ---------- */
const Panels = styled.div`width: 303px; margin-left: 1px; display: flex; flex-direction: column; background: #535353; border-left: 1px solid #333; border-right: 1px solid #3c3c3c; flex: none;`;
const Panel = styled.div`height: ${(p) => p.$h}px; flex: none; display: flex; flex-direction: column; border-bottom: 2px solid #363636;`;
const Row = styled.div`display: flex; align-items: center; flex: none; height: ${(p) => p.$h}px; padding: 0 ${(p) => p.$pr || 0}px 0 ${(p) => p.$pl || 0}px; margin-top: ${(p) => p.$mt || 0}px; justify-content: ${(p) => (p.$sb ? "space-between" : "flex-start")};`;
const Spectrum = styled.div`
  width: 272px; height: 65px; margin: 9px 0 0 7px; border: 1px solid #3a3a3a; flex: none;
  background: linear-gradient(180deg, #fff 0, rgba(255,255,255,0) 50%, rgba(0,0,0,0) 50%, #000 100%),
    linear-gradient(90deg, #f00, #ff0 16.700%, #0f0 33.300%, #0ff 50%, #00f 66.700%, #f0f 83.300%, #f00);
`;
const HexField = styled.div`width: 57px; height: 25px; background: #454545; border: 1px solid #616161; border-radius: 3px; font: 14px/21px ${serif}; color: #f4f4f4; padding-left: 5px; margin-left: 5px;`;
const SortIcon = () => <Svg w={6} h={10}><path d="M1 3.500l2-2 2 2M1 6.500l2 2 2-2" stroke="#aaa" strokeWidth="1.200" /></Svg>;
const SearchRow = styled.div`height: 34px; margin: 0 9px 0 9px; border-bottom: 1px solid #5f5f5f; display: flex; align-items: center; padding: 9px 4px 0 1px; flex: none;`;
const DimSelect = styled.div`height: 24px; margin: 10px 9px 0 9px; border: 1px solid #5d5d5d; border-radius: 3px; background: #4e4e4e; display: flex; align-items: center; justify-content: flex-end; padding-right: 5px; flex: none;`;
const ViewBtn = styled.div`width: 25px; height: 25px; background: #353535; border: 1px solid #5a5a5a; border-radius: 4px; display: flex; align-items: center; justify-content: center;`;
const LibArea = styled.div`height: 74px; background: #4c4c4c; border: solid #464646; border-width: 1px 0; display: flex; align-items: center; padding-left: 123px; flex: none;`;
const SwatchStrip = styled.div`width: 160px; height: 33px; border: 1px solid #616161; background: #4c4c4c; display: flex; align-items: center; padding-left: 4px; margin-left: 6px;`;
const Chip = styled.div`width: 20px; height: 20px; background: ${(p) => p.$c}; ${(p) => p.$on && "border: 1px solid #fff; box-shadow: inset 0 0 0 1px #000;"}`;
const BigSwatch = styled.div`width: 27px; height: 27px; border: 1px solid #000; background: #fff; padding: 3px; &::after { content: ""; display: block; height: 19px; border: 1px solid #000; }`;
const ListBox = styled.div`width: 289px; height: ${(p) => p.$h}px; margin: ${(p) => p.$mt || 7}px 0 0 5px; border: 2px solid #5a5a5a; border-radius: 2px; flex: none; display: flex; flex-direction: column; position: relative;`;
const BrushDot = styled.div`width: 40px; height: 41px; background: #e4e4e4; border-bottom: 1px solid #888; display: flex; align-items: center; justify-content: center; &::after { content: ""; width: 16px; height: 16px; border-radius: 50%; background: #000; }`;
const BrushRow = styled.div`width: 269px; height: 40px; background: #e4e4e4; display: flex; align-items: center; justify-content: space-between; padding: 0 7px 0 5px; color: #333; &::before { content: ""; width: 221px; height: 3px; background: #000; }`;
const ScrollHints = styled.div`position: absolute; right: 3px; top: 1px; bottom: 1px; display: flex; flex-direction: column; justify-content: space-between;`;
const LayerRow = styled.div`
  height: ${(p) => (p.$on ? 26 : 27)}px; display: flex; align-items: center; background: ${(p) => (p.$on ? "#4f667f" : "transparent")}; border-bottom: 1px solid #606060; position: relative; flex: none;
  > * { flex: none; }
  ${(p) => p.$on && css`&::after { content: ""; position: absolute; right: 0; top: 0; width: 8px; height: 8px; background: linear-gradient(45deg, transparent 50%, #d5d5d5 50%); }`}
`;
const ColorBar = styled.div`width: 4px; height: 23px; background: ${(p) => p.$c}; margin-left: 1px;`;
const RedSq = styled.div`width: 10px; height: 10px; background: #ff4f4f; border: 1px solid #000; margin-left: 6px;`;

const Trash = ({ c = G }) => <Svg w={14} h={16}><path d="M0 3h14M4.500 3V1h5v2" stroke={c} strokeWidth="1.500" /><path d="M1.500 4.500l.8 10.700h9.400l.8-10.700" stroke={c} strokeWidth="1.400" /><path d="M4.800 5v9M7 5v9M9.200 5v9" stroke={c} strokeWidth="1.200" /></Svg>;
const NewIcon = () => <Svg w={13} h={14}><path d="M0 0h13v14H6.500V7H0z" fill={G} /><path d="M0 8.500h5.200V14z" fill={G} /></Svg>;
const CC = () => (
  <Svg w={57} h={40}><g stroke="#6e6e6e" strokeWidth="1.700">
    <path d="M0 4l11 11M11 4L0 15" /><path d="M15 8q4-2 8-1C33-4 56 0 55.500 20 55 32 46 38.500 37 38.500H24C12 38.500 5 30 5.800 19" />
    <path d="M28 9c10-6 22-1 21.500 11C49 31 36 36 28 27l-8-8" strokeWidth="2.200" /><path d="M34 21l-5-5c-6-7-18-3-18 6 0 8 8 12 15 10" strokeWidth="2.200" />
  </g></Svg>
);
const Thumb = ({ faint }) => (
  <Svg w={23}><path d="M.7.700h21.600v21.600H.7z" fill="#fff" stroke="#000" strokeWidth="1.400" />
    {faint ? <g stroke="#666" strokeWidth=".8"><path d="M9 3c-4 3-1 5-3 8s-3 4 0 8M13 3c3 3 5 8 1 10s-5-3-4-7M15 14c4-1 3 4 5 5M5 5l-2 3M17 4l3 4M3 14l4 6M9 17l6 3M18 11h2" /><path d="M4 3l3 2M15 18l3 2M10 13l-3 3 5 1" /></g>
      : <g stroke="#333" strokeWidth=".9"><circle cx="11.500" cy="11.500" r="9.500" /><path d="M11.500 11.500L9.500 2M11.500 11.500L11 2M11.500 11.500l8.500-5M11.500 11.500L20.500 14M11.500 11.500l3 9.500M11.500 11.500L7 20M11.500 11.500L2 7.500M11.500 11.500H2" /></g>}
  </Svg>
);
const Target = () => <Svg w={11}><circle cx="5.500" cy="5.500" r="4.500" stroke="#c8c8c8" strokeWidth="1.500" /></Svg>;
const Layer = ({ on, name, c }) => (
  <LayerRow $on={on}>
    <Cell $w={25} $center>{on && <Svg w={15} h={10}><path d="M0 5q7.500-9.500 15 0-7.500 9.500-15 0z" fill="#d0d0d0" /><circle cx="7.500" cy="5" r="3" fill="#4f667f" /><circle cx="7.500" cy="5" r="1.500" fill="#ddd" /></Svg>}</Cell>
    <Rule $h={25} $c="#606060" /><Rule $h={25} $c="#606060" $ml={25} /><ColorBar $c={c} />
    <Rule $h={25} $c="#606060" $ml={1} />
    <Cell $ml={6} $w={25}><Chev d="right" s={11} /></Cell><Thumb faint={!on} />
    <Cell $ml={6} $w={122}><Text $f="serif" $s={14.5} $c="#d8d8d8">图层&nbsp;&nbsp;{name}</Text></Cell>
    <Rule $h={25} $c="#606060" /><Cell $ml={8}><Target /></Cell>{on && <RedSq />}
  </LayerRow>
);
const PanelTabs = ({ children }) => <Tabs>{children}<TabEnd $pr={8}><Burger /></TabEnd></Tabs>;

const PanelsView = () => (
  <Panels>
    <Head><Double /></Head>
    <Panel $h={151}>
      <PanelTabs><Tab $w={60} $pl={7} $on><SortIcon />颜色</Tab></PanelTabs>
      <Row $h={25} $pl={6} $pr={21} $mt={8} $sb>
        <Svg w={49} h={17}><path d="M0 0h49v17H0z" fill="#333" /><path d="M1 1h15v15H1zM33 1h15v15H33z" fill="#fff" /><path d="M17 1h15v15H17z" fill="#050000" /><path d="M1 16L16 1" stroke="#f00" strokeWidth="2.400" /></Svg>
        <Row $h={25}><Text $f="mono" $s={14} $c="#c8c8c8">#</Text><HexField>FFFFFF</HexField></Row>
      </Row>
      <Spectrum />
    </Panel>
    <Panel $h={246}>
      <PanelTabs><Tab $w={54} $pl={11}>色板</Tab><Tab $w={51} $pl={11} $on>库</Tab></PanelTabs>
      <SearchRow>
        <Svg w={12}><circle cx="5" cy="5" r="4" stroke="#fff" strokeWidth="1.600" /><path d="M8 8l4 4" stroke="#fff" strokeWidth="2" /></Svg>
        <Cell $ml={7} $w={249}><Text $i $s={14} $c="#707070" $ls={-0.3}>搜索当前库</Text></Cell><Chev c="#858585" w={1.300} />
      </SearchRow>
      <DimSelect><Chev c="#858585" w={1.300} /></DimSelect>
      <Row $h={41} $pl={8} $pr={13}>
        <Cell $w={80}><Text $s={14} $c="#f4f4f4" $ls={-0.3}>按类型查看</Text></Cell><Chev c="#c4c4c4" w={1.400} />
        <Cell $ml={140}><ViewBtn><Svg w={16}><path d="M0 0h7v7H0zM9 0h7v7H9zM0 9h7v7H0zM9 9h7v7H9z" fill="#dcdcdc" /></Svg></ViewBtn></Cell>
        <Cell $ml={7}><Svg w={16} h={15}><path d="M0 0h4v4H0zM0 5.500h4v4H0zM0 11h4v4H0zM6 1h10v2H6zM6 6.500h10v2H6zM6 12h10v2H6z" fill="#d0d0d0" /></Svg></Cell>
      </Row>
      <LibArea><CC /></LibArea>
      <Row $h={24} $pl={187}>
        <Cell $w={39} $mt={2}><Text $s={12.5} $c="#f0f0f0">-- KB</Text></Cell>
        <Svg w={24} h={16}><path d="M5 14a5 5 0 0 1 0-9 6 6 0 0 1 11-1 5 5 0 0 1 2 10z" fill="#a0a0a0" /><circle cx="18" cy="10.500" r="5" fill="#ddd" /><path d="M16 8.500l4 4M20 8.500l-4 4" stroke="#444" strokeWidth="1.300" /></Svg>
        <Cell $ml={11}><Trash c="#a0a0a0" /></Cell>
      </Row>
    </Panel>
    <Panel $h={90}>
      <PanelTabs><Tab $w={90} $pl={7} $on><SortIcon />颜色参考</Tab></PanelTabs>
      <Row $h={33} $pl={5} $mt={7}>
        <BigSwatch />
        <SwatchStrip>
          {["#7aba5c", "#3f7035", "#242e6b", "#c485ae", "#6f5d4b"].map((c, i) => <Chip key={c} $c={c} $on={i === 0} />)}
          <Rule $h={31} $c="#616161" $ml={31} /><Cell $ml={6}><Chev /></Cell>
        </SwatchStrip>
        <Cell $ml={12}><Wheel /></Cell>
        <Cell $ml={13}><Svg w={20} h={14}><path d="M5 5V.7h14.300v11H8" stroke="#bbb" strokeWidth="1.300" /><path d="M10 1h4v10h-4z" fill="#777" stroke="#bbb" /><path d="M3.500 7v7M0 10.500h7" stroke="#ccc" strokeWidth="2" /></Svg></Cell>
      </Row>
    </Panel>
    <Panel $h={246}>
      <PanelTabs><Tab $w={53} $pl={11} $on>画笔</Tab><Tab $w={52} $pl={10}>描边</Tab><Tab $w={55} $pl={12}>符号</Tab></PanelTabs>
      <ListBox $h={178}><BrushDot /><BrushRow>基本</BrushRow><ScrollHints><Chev d="up" c="#5c5c5c" /><Chev c="#5c5c5c" /></ScrollHints></ListBox>
      <Row $h={24} $pl={12}>
        <Svg w={20} h={14}><path d="M0 2h3v12H0zM4 0h4v14H4zM9 1l3-1 4 13-3 1z" fill={G} /><path d="M15 11h5l-2.500 3z" fill={G} /></Svg>
        <Cell $ml={12}><Svg w={22} h={16}><path d="M0 0h6l2 2h7v4L8 14H0z" fill={G} /><ellipse cx="14" cy="10.500" rx="7" ry="5" fill="#555" stroke={G} strokeWidth="1.500" /><path d="M10 10c2-3 4-1 6 1s4 0 3-2" stroke={G} strokeWidth="1.300" /></Svg></Cell>
        <Cell $ml={88}><Svg w={15}><path d="M1 1l13 13M14 0L6 9" stroke="#777" strokeWidth="1.800" /><path d="M0 15c2-1 2-5 5-5l2 2c0 3-4 3-7 3z" fill="#777" /></Svg></Cell>
        <Cell $ml={18}><Svg w={14}><path d="M.7.700h12.600v12.600H.7z" stroke="#737373" strokeWidth="1.400" /><path d="M0 0h14v3.500H0zM2.500 5.500h2v1.500h-2zM2.500 8h2v1.500h-2zM2.500 10.500h2V12h-2zM6 5.500h6v1.500H6zM6 8h6v1.500H6zM6 10.500h6V12H6z" fill="#737373" /></Svg></Cell>
        <Cell $ml={19}><NewIcon /></Cell><Cell $ml={19}><Trash c="#737373" /></Cell>
      </Row>
    </Panel>
    <Panel $h={249}>
      <PanelTabs><Tab $w={54} $pl={11} $on>图层</Tab></PanelTabs>
      <ListBox $h={181} $mt={7}><Layer on name="2" c="#ff4f4f" /><Layer name="1" c="#4f80ff" /></ListBox>
      <Row $h={25} $pl={5}>
        <Cell $w={84}><Text $f="serif" $s={14.5} $c="#c4c4c4" $ls={0.2}>2&nbsp;&nbsp;图层</Text></Cell>
        <Export s={16} />
        <Cell $ml={17}><Svg w={16}><circle cx="10" cy="5.500" r="4.800" stroke={G} strokeWidth="1.500" /><path d="M6.500 9L1 15" stroke={G} strokeWidth="2" /></Svg></Cell>
        <Cell $ml={16}><Svg w={14}><path d="M4 4h9.500v9.500H4z" stroke="#777" /><path d="M.7.700h9.600v9.600H.7z" stroke={G} strokeWidth="1.400" /><path d="M4 4h5.500v5.500H4z" fill={G} /></Svg></Cell>
        <Cell $ml={16}><Svg w={18} h={13}><path d="M1 0v5h5M4 2.500L7 5 4 7.500" stroke={G} strokeWidth="1.600" /><path d="M8 2h10v11h-5L8 7z" fill={G} /><path d="M8 8.500V9l4 4h-.5z" fill={G} /></Svg></Cell>
        <Cell $ml={18}><NewIcon /></Cell><Cell $ml={19}><Trash /></Cell>
      </Row>
    </Panel>
  </Panels>
);

export default function App() {
  return (
    <Screen>
      <Global />
      <TaskbarView />
      <AppFrame>
        <MenuBarView />
        <ControlBarView />
        <Work><ToolsView /><DocView /><DockView /><PanelsView /></Work>
      </AppFrame>
      <Tooltip>直接选择工具 (A)</Tooltip>
      <Pathfinder />
    </Screen>
  );
}
